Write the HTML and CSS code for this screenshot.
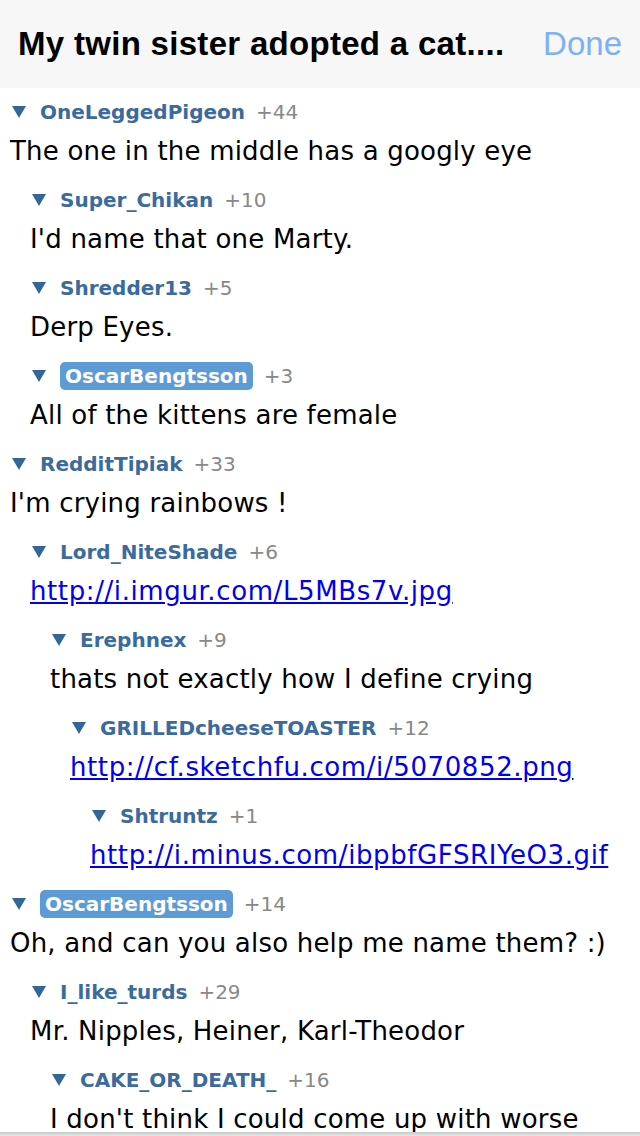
FILE: index.html
```html
<!DOCTYPE html>
<html>

<head>
  <meta content="width=device-width, initial-scale=1">
  <link rel="stylesheet" href="styles.css">
</head>

<body>
  <div class="navbar">
    <h1 class="title">My twin sister adopted a cat....</h1>
    <span class="done">Done</span>
  </div>

  <div class="thread">
    <div class="comment">
      <div class="head"><svg class="arrow" viewBox="0 0 14 12"><polygon points="0,0 14,0 7,12"/></svg><span class="user">OneLeggedPigeon</span><span class="score">+44</span></div>
      <div class="body">The one in the middle has a googly eye</div>
      <div class="replies">
        <div class="comment">
          <div class="head"><svg class="arrow" viewBox="0 0 14 12"><polygon points="0,0 14,0 7,12"/></svg><span class="user">Super_Chikan</span><span class="score">+10</span></div>
          <div class="body">I'd name that one Marty.</div>
        </div>
        <div class="comment">
          <div class="head"><svg class="arrow" viewBox="0 0 14 12"><polygon points="0,0 14,0 7,12"/></svg><span class="user">Shredder13</span><span class="score">+5</span></div>
          <div class="body">Derp Eyes.</div>
        </div>
        <div class="comment">
          <div class="head"><svg class="arrow" viewBox="0 0 14 12"><polygon points="0,0 14,0 7,12"/></svg><span class="user op">OscarBengtsson</span><span class="score">+3</span></div>
          <div class="body">All of the kittens are female</div>
        </div>
      </div>
    </div>

    <div class="comment">
      <div class="head"><svg class="arrow" viewBox="0 0 14 12"><polygon points="0,0 14,0 7,12"/></svg><span class="user">RedditTipiak</span><span class="score">+33</span></div>
      <div class="body">I'm crying rainbows !</div>
      <div class="replies">
        <div class="comment">
          <div class="head"><svg class="arrow" viewBox="0 0 14 12"><polygon points="0,0 14,0 7,12"/></svg><span class="user">Lord_NiteShade</span><span class="score">+6</span></div>
          <div class="body"><a href="#">http://i.imgur.com/L5MBs7v.jpg</a></div>
          <div class="replies">
            <div class="comment">
              <div class="head"><svg class="arrow" viewBox="0 0 14 12"><polygon points="0,0 14,0 7,12"/></svg><span class="user">Erephnex</span><span class="score">+9</span></div>
              <div class="body">thats not exactly how I define crying</div>
              <div class="replies">
                <div class="comment">
                  <div class="head"><svg class="arrow" viewBox="0 0 14 12"><polygon points="0,0 14,0 7,12"/></svg><span class="user">GRILLEDcheeseTOASTER</span><span class="score">+12</span></div>
                  <div class="body"><a href="#">http://cf.sketchfu.com/i/5070852.png</a></div>
                  <div class="replies">
                    <div class="comment">
                      <div class="head"><svg class="arrow" viewBox="0 0 14 12"><polygon points="0,0 14,0 7,12"/></svg><span class="user">Shtruntz</span><span class="score">+1</span></div>
                      <div class="body"><a href="#">http://i.minus.com/ibpbfGFSRIYeO3.gif</a></div>
                    </div>
                  </div>
                </div>
              </div>
            </div>
          </div>
        </div>
      </div>
    </div>

    <div class="comment">
      <div class="head"><svg class="arrow" viewBox="0 0 14 12"><polygon points="0,0 14,0 7,12"/></svg><span class="user op">OscarBengtsson</span><span class="score">+14</span></div>
      <div class="body">Oh, and can you also help me name them? :)</div>
      <div class="replies">
        <div class="comment">
          <div class="head"><svg class="arrow" viewBox="0 0 14 12"><polygon points="0,0 14,0 7,12"/></svg><span class="user">I_like_turds</span><span class="score">+29</span></div>
          <div class="body">Mr. Nipples, Heiner, Karl-Theodor</div>
          <div class="replies">
            <div class="comment">
              <div class="head"><svg class="arrow" viewBox="0 0 14 12"><polygon points="0,0 14,0 7,12"/></svg><span class="user">CAKE_OR_DEATH_</span><span class="score">+16</span></div>
              <div class="body">I don't think I could come up with worse</div>
            </div>
          </div>
        </div>
      </div>
    </div>
  </div>

  <div class="toolbar"></div>
</body>

</html>
```

FILE: styles.css
```css
body {
  margin: 0;
  background: #fff;
  font-family: "DejaVu Sans", Verdana, sans-serif;
  overflow: hidden;
}

.navbar {
  display: flex;
  align-items: center;
  justify-content: space-between;
  height: 88px;
  padding: 0 18px;
  background-color: #f7f7f7;
  font-family: "Liberation Sans", Helvetica, Arial, sans-serif;
}

.title {
  margin: 0;
  font-size: 33px;
  font-weight: bold;
  letter-spacing: 0.3px;
  color: #000;
}

.done {
  font-size: 33px;
  color: #7eb1f4;
}

.thread {
  padding: 12px 0 0 10px;
}

.replies {
  padding-left: 20px;
}

.head {
  display: flex;
  align-items: center;
  height: 24px;
  font-size: 20px;
}

.arrow {
  width: 14px;
  height: 12px;
  margin: 0 14px 0 2px;
  fill: #336699;
}

.user {
  font-weight: bold;
  color: #3a6b9c;
}

.user.op {
  background-color: #5d9bd6;
  color: #fff;
  border-radius: 5px;
  padding: 2px 5px;
}

.score {
  margin-left: 11px;
  color: #888;
}

.body {
  margin: 12px 0 22px;
  line-height: 30px;
  font-size: 26px;
  letter-spacing: 0.2px;
  color: #000;
  white-space: nowrap;
}

.body a {
  color: #0000ee;
  letter-spacing: 0.6px;
}

.toolbar {
  position: fixed;
  left: 0;
  right: 0;
  bottom: 0;
  height: 4px;
  background: linear-gradient(#c8c8c8, #e8e8e8);
}
```
